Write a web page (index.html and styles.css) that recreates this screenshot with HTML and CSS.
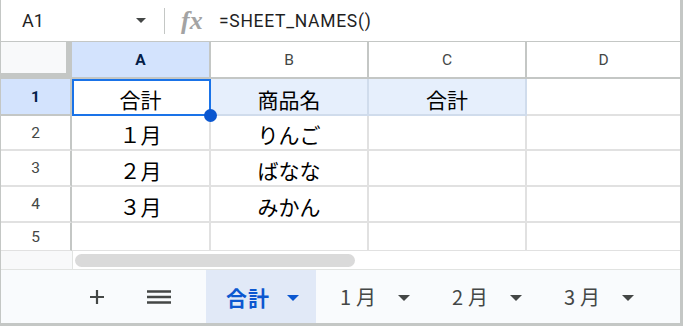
FILE: index.html
```html
<!DOCTYPE html>
<html lang="ja">
<head>
<meta charset="UTF-8">
<meta name="viewport" content="width=device-width, initial-scale=1.0">
<title>SHEET_NAMES</title>
<link rel="stylesheet" href="styles.css">
</head>
<body>

<div class="sheet-app">

  <!-- Formula bar -->
  <div class="formula-bar">
    <div class="name-box">
      <span class="cell-ref">A1</span>
      <span class="caret"></span>
    </div>
    <div class="fx">fx</div>
    <div class="formula">=SHEET_NAMES()</div>
  </div>

  <!-- Grid -->
  <div class="grid">
    <div class="corner"></div>
    <div class="col-head selected">A</div>
    <div class="col-head">B</div>
    <div class="col-head">C</div>
    <div class="col-head last">D</div>

    <div class="row-head selected">1</div>
    <div class="cell active">合計</div>
    <div class="cell hl">商品名</div>
    <div class="cell hl">合計</div>
    <div class="cell last"></div>

    <div class="row-head">2</div>
    <div class="cell">１月</div>
    <div class="cell">りんご</div>
    <div class="cell"></div>
    <div class="cell last"></div>

    <div class="row-head">3</div>
    <div class="cell">２月</div>
    <div class="cell">ばなな</div>
    <div class="cell"></div>
    <div class="cell last"></div>

    <div class="row-head">4</div>
    <div class="cell">３月</div>
    <div class="cell">みかん</div>
    <div class="cell"></div>
    <div class="cell last"></div>

    <div class="row-head cut">5</div>
    <div class="cell cut"></div>
    <div class="cell cut"></div>
    <div class="cell cut"></div>
    <div class="cell cut last"></div>
  </div>

  <!-- Horizontal scrollbar -->
  <div class="scroll-strip">
    <div class="scroll-gutter"></div>
    <div class="scroll-track"><div class="thumb"></div></div>
  </div>

  <!-- Sheet tabs -->
  <div class="tab-bar">
    <button class="tool-btn add-btn">
      <svg width="16" height="16" viewBox="0 0 16 16"><path d="M8 1v14M1 8h14" stroke="#444746" stroke-width="2.2" fill="none"/></svg>
    </button>
    <button class="tool-btn menu-btn">
      <svg width="24" height="16" viewBox="0 0 24 16"><path d="M0 2.5h24M0 8h24M0 13.5h24" stroke="#444746" stroke-width="2.6" fill="none"/></svg>
    </button>
    <div class="tab current"><span class="tab-name">合計</span><span class="tab-caret"></span></div>
    <div class="tab"><span class="tab-name">1月</span><span class="tab-caret"></span></div>
    <div class="tab"><span class="tab-name">2月</span><span class="tab-caret"></span></div>
    <div class="tab"><span class="tab-name">3月</span><span class="tab-caret"></span></div>
  </div>

</div>

</body>
</html>
```

FILE: styles.css
```css
  /* Page */
  body {
    margin: 0;
    background-color: #fff;
    font-family: Roboto, "Noto Sans CJK JP", sans-serif;
    color: #1f1f1f;
  }

  .sheet-app {
    width: 683px;
    height: 326px;
    box-sizing: border-box;
    border-left: 1px solid #c4c7c5;
    border-right: 3px solid #c4c7c5;
    border-bottom: 3px solid #c4c7c5;
    display: flex;
    flex-direction: column;
    overflow: hidden;
  }

  /* Formula bar */
  .formula-bar {
    height: 41px;
    flex: none;
    display: flex;
    align-items: center;
    border-bottom: 1px solid #c4c7c5;
  }

  .name-box {
    width: 164px;
    height: 26px;
    display: flex;
    align-items: center;
    justify-content: space-between;
    padding: 0 18px 0 21px;
    box-sizing: border-box;
    border-right: 1px solid #c4c7c5;
  }

  .cell-ref {
    font-size: 18px;
    color: #1f1f1f;
  }

  .caret {
    width: 0;
    height: 0;
    border-left: 5px solid transparent;
    border-right: 5px solid transparent;
    border-top: 5px solid #444746;
  }

  .fx {
    margin-left: 16px;
    width: 38px;
    font-family: "Liberation Serif", serif;
    font-style: italic;
    font-weight: bold;
    font-size: 26px;
    color: #a3a3a3;
  }

  .formula {
    font-size: 17.5px;
    color: #1f1f1f;
    letter-spacing: 0.7px;
  }

  /* Grid */
  .grid {
    flex: none;
    display: grid;
    grid-template-columns: 71px 139px 158px 158px 153px;
    grid-template-rows: 37px 37px 35px 36px 36px 28px;
  }

  .grid > div {
    box-sizing: border-box;
  }

  .corner {
    background-color: #f8f9fa;
    border-right: 6px solid #c4c7c5;
    border-bottom: 6px solid #c4c7c5;
  }

  .col-head {
    display: flex;
    align-items: center;
    justify-content: center;
    font-size: 15.5px;
    color: #444746;
    border-right: 2px solid #c4c7c5;
    border-bottom: 2px solid #c4c7c5;
  }

  .col-head.selected {
    background-color: #d3e3fd;
    color: #041e49;
    font-weight: bold;
  }

  .col-head.last {
    border-right: none;
  }

  .row-head {
    display: flex;
    align-items: center;
    justify-content: center;
    font-size: 15.5px;
    color: #444746;
    border-right: 2px solid #c4c7c5;
    border-bottom: 2px solid #e1e1e1;
  }

  .row-head.selected {
    background-color: #d3e3fd;
    color: #041e49;
    font-weight: bold;
    border-bottom-color: #c4c7c5;
  }

  .cell {
    display: flex;
    align-items: flex-end;
    justify-content: center;
    padding-bottom: 1px;
    font-family: "Noto Sans CJK JP", sans-serif;
    font-size: 21px;
    line-height: 28px;
    color: #000;
    border-right: 2px solid #e1e1e1;
    border-bottom: 2px solid #e1e1e1;
  }

  .cell.hl {
    background-color: #e6effc;
    border-right-color: #d0dcec;
    border-bottom-color: #d0dcec;
  }

  .cell.last {
    border-right: none;
  }

  .cut {
    border-bottom-width: 1px !important;
  }

  /* Selected cell with fill handle */
  .cell.active {
    position: relative;
    border-right-color: #1a73e8;
    border-bottom-color: #1a73e8;
    box-shadow: inset 2px 2px 0 #1a73e8;
  }

  .cell.active::after {
    content: "";
    position: absolute;
    right: -8px;
    bottom: -8px;
    width: 13px;
    height: 13px;
    border-radius: 50%;
    background-color: #0b57d0;
  }

  /* Scrollbar */
  .scroll-strip {
    height: 18px;
    flex: none;
    display: flex;
    border-bottom: 1px solid #e1e3e1;
  }

  .scroll-gutter {
    width: 71px;
    background-color: #f8f9fa;
    border-right: 1px solid #e1e3e1;
  }

  .scroll-track {
    flex: 1;
    padding: 3px 0 0 2px;
  }

  .thumb {
    width: 280px;
    height: 13px;
    border-radius: 7px;
    background-color: #dadada;
  }

  /* Sheet tabs */
  .tab-bar {
    flex: 1;
    display: flex;
    align-items: stretch;
    padding-left: 71px;
    background-color: #f9fbfd;
  }

  .tool-btn {
    border: none;
    background: none;
    padding: 0;
    display: flex;
    align-items: center;
    justify-content: center;
  }

  .add-btn {
    width: 50px;
  }

  .menu-btn {
    width: 74px;
    margin-right: 10px;
  }

  .tab {
    width: 112px;
    box-sizing: border-box;
    display: flex;
    align-items: center;
    padding-left: 24px;
    font-family: "Noto Sans CJK JP", sans-serif;
    font-size: 20px;
    color: #444746;
  }

  .tab .tab-name {
    letter-spacing: 5px;
  }

  .tab.current {
    width: 110px;
    padding-left: 20px;
    background-color: #e1e9f7;
    color: #0b57d0;
    font-weight: bold;
    font-size: 21px;
  }

  .tab-name {
    width: 58px;
  }

  .tab.current .tab-name {
    width: 61px;
    letter-spacing: 1px;
  }

  .tab-caret {
    width: 0;
    height: 0;
    margin-top: 3px;
    border-left: 6px solid transparent;
    border-right: 6px solid transparent;
    border-top: 6px solid #444746;
  }

  .tab.current .tab-caret {
    border-top-color: #0b57d0;
  }
```
